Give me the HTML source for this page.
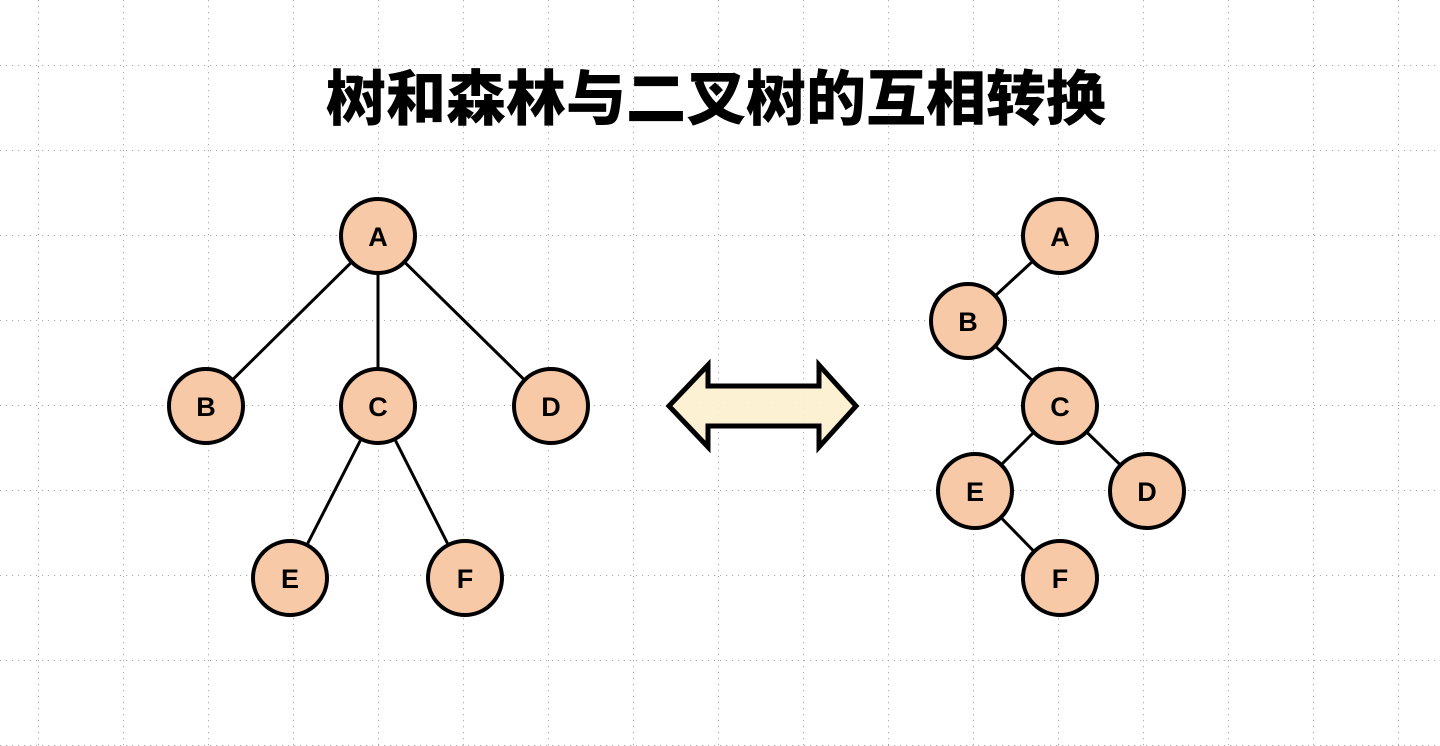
<!DOCTYPE html>
<html><head><meta charset="utf-8"><style>
html,body{margin:0;padding:0;background:#fff;}
body{width:1440px;height:746px;position:relative;overflow:hidden;}
svg{position:absolute;left:0;top:0;}
.t{position:absolute;left:0;width:1432px;top:62px;text-align:center;font-family:"Liberation Sans","Noto Sans CJK SC",sans-serif;font-weight:900;font-size:60px;line-height:76px;color:#000;letter-spacing:0px;}
</style></head><body>
<svg width="1440" height="746">
<defs>
<pattern id="gv" x="38" y="0" width="85" height="6" patternUnits="userSpaceOnUse"><rect x="0" y="0" width="1" height="1.2" fill="#aaa"/></pattern>
<pattern id="gh" x="0" y="65" width="6" height="85" patternUnits="userSpaceOnUse"><rect x="0" y="0" width="1.2" height="1" fill="#aaa"/></pattern>
</defs>
<rect width="1440" height="746" fill="url(#gv)"/>
<rect width="1440" height="746" fill="url(#gh)"/>
<polygon points="669,406 708,365 708,386 819,386 819,365 856,406 819,447 819,426 708,426 708,447" fill="#fdf0cf" fill-opacity="0.9" stroke="#000" stroke-width="5" stroke-linejoin="miter"/>
<g stroke="#000" stroke-width="3">
<line x1="378" y1="236" x2="206" y2="406"/><line x1="378" y1="236" x2="378" y2="406"/><line x1="378" y1="236" x2="551" y2="406"/>
<line x1="378" y1="406" x2="290" y2="578"/><line x1="378" y1="406" x2="465" y2="578"/>
<line x1="1060" y1="236" x2="968" y2="321"/><line x1="968" y1="321" x2="1060" y2="406"/>
<line x1="1060" y1="406" x2="975" y2="491"/><line x1="1060" y1="406" x2="1147" y2="491"/><line x1="975" y1="491" x2="1060" y2="578"/>
</g>
<g fill="#f8c9a6" stroke="#000" stroke-width="4">
<circle cx="378" cy="236" r="37"/><circle cx="206" cy="406" r="37"/><circle cx="378" cy="406" r="37"/><circle cx="551" cy="406" r="37"/><circle cx="290" cy="578" r="37"/><circle cx="465" cy="578" r="37"/>
<circle cx="1060" cy="236" r="37"/><circle cx="968" cy="321" r="37"/><circle cx="1060" cy="406" r="37"/><circle cx="975" cy="491" r="37"/><circle cx="1147" cy="491" r="37"/><circle cx="1060" cy="578" r="37"/>
</g>
<g font-family="Liberation Sans, sans-serif" font-weight="bold" font-size="27" text-anchor="middle" fill="#000">
<text x="378" y="246">A</text><text x="206" y="416">B</text><text x="378" y="416">C</text><text x="551" y="416">D</text><text x="290" y="588">E</text><text x="465" y="588">F</text>
<text x="1060" y="246">A</text><text x="968" y="331">B</text><text x="1060" y="416">C</text><text x="975" y="501">E</text><text x="1147" y="501">D</text><text x="1060" y="588">F</text>
</g>
</svg>
<div class="t">树和森林与二叉树的互相转换</div>
</body></html>
